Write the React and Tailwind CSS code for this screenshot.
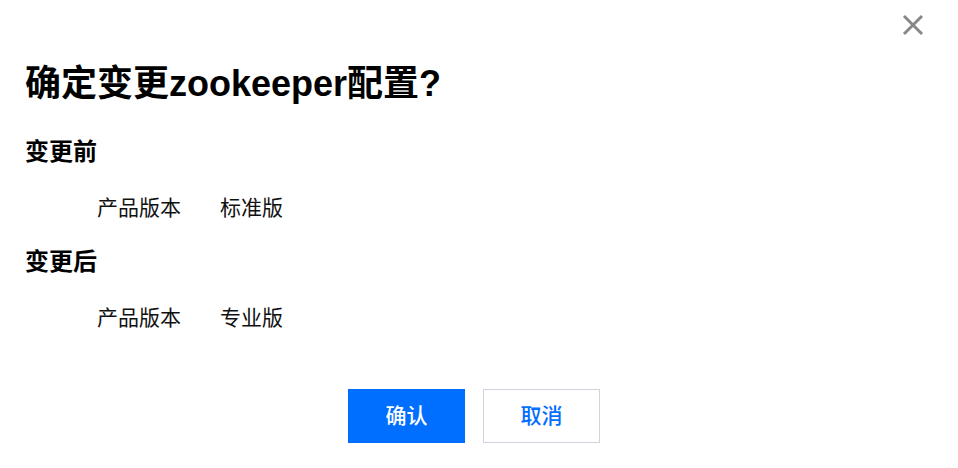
import React from "react";

const font = {
  fontFamily: '"Liberation Sans", "Noto Sans CJK SC", sans-serif',
};

function Section({ title, label, value }) {
  return (
    <div className="flex flex-col">
      <h3 className="text-[24px] leading-[36px] font-bold text-black">{title}</h3>
      <div className="flex pl-[72px] mt-[22px] text-[21px] leading-[32px] text-[#111]">
        <span className="w-[123px]">{label}</span>
        <span>{value}</span>
      </div>
    </div>
  );
}

export default function App() {
  return (
    <div className="w-[958px] h-[468px] bg-white relative overflow-hidden" style={font}>
      <button className="absolute left-[901px] top-[13px] w-[24px] h-[24px] flex items-center justify-center">
        <svg width="22" height="22" viewBox="0 0 22 22">
          <path d="M2 2 L20 20 M20 2 L2 20" stroke="#888" strokeWidth="3" strokeLinecap="butt" />
        </svg>
      </button>
      <div className="flex flex-col pl-[25px] pt-[64px]">
        <h2 className="text-[36px] leading-[40px] font-bold text-black">确定变更zookeeper配置?</h2>
        <div className="flex flex-col gap-[20px] mt-[30px]">
          <Section title="变更前" label="产品版本" value="标准版" />
          <Section title="变更后" label="产品版本" value="专业版" />
        </div>
        <div className="flex justify-center gap-[18px] mt-[55px] pr-[35px]">
          <button className="w-[117px] h-[54px] bg-[#006eff] text-white text-[21px] font-medium">确认</button>
          <button className="w-[117px] h-[54px] bg-white border border-[#cfd5de] text-[#006eff] text-[21px] font-medium">取消</button>
        </div>
      </div>
    </div>
  );
}
